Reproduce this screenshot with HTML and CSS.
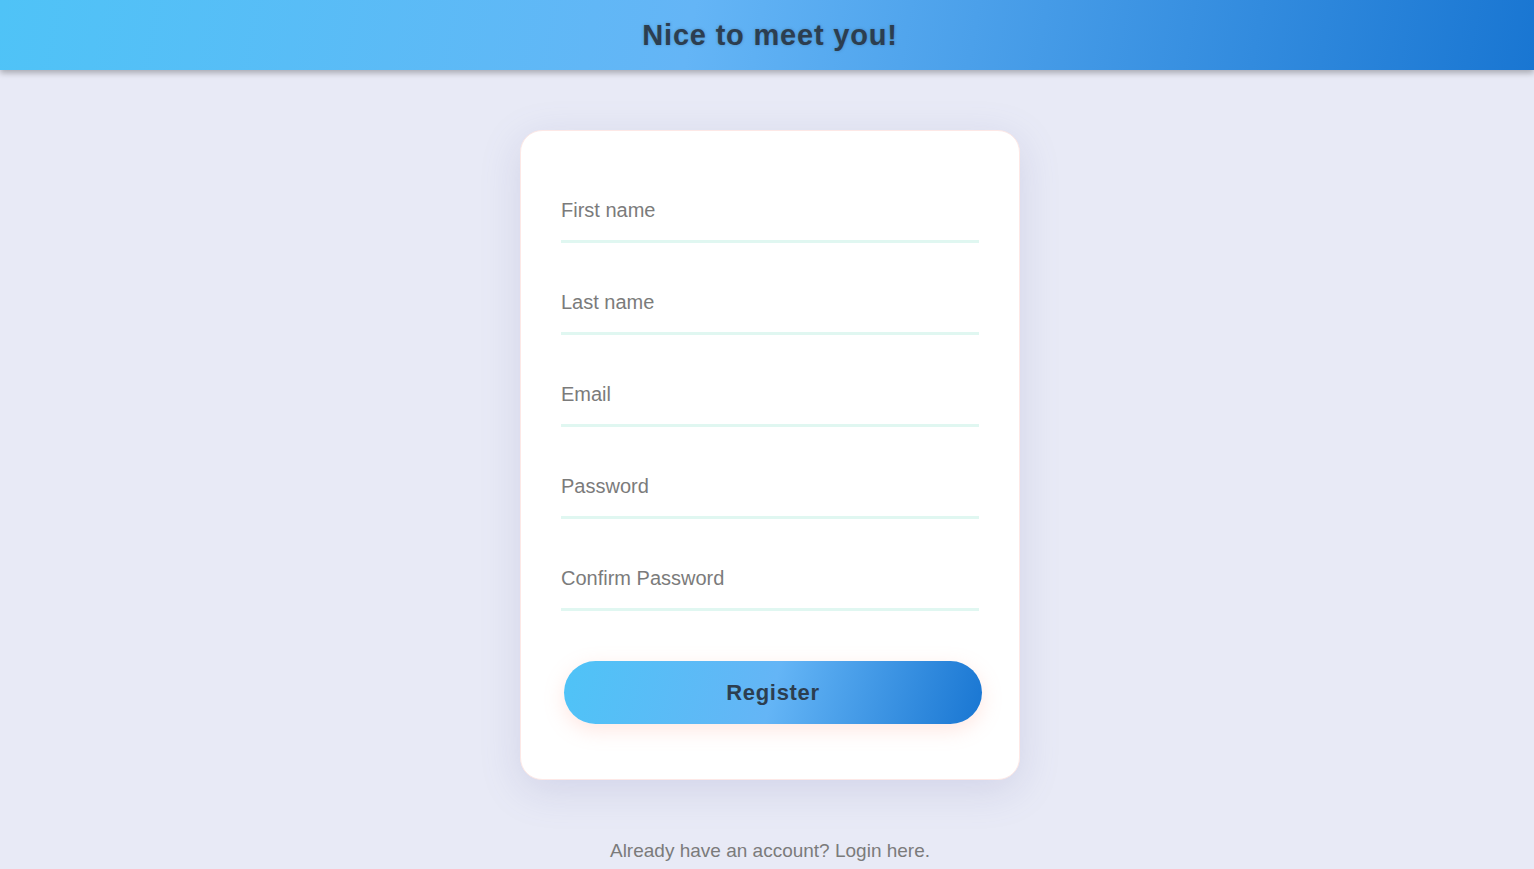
FILE: index.html
```html
<!DOCTYPE html>
<html lang="en">
<head>
<meta charset="utf-8">
<title>Register</title>
<link rel="stylesheet" href="styles.css">
</head>
<body>
<header class="topbar">
  <h1 class="title">Nice to meet you!</h1>
</header>
<main class="page">
  <form class="card">
    <input class="field" type="text" placeholder="First name">
    <input class="field" type="text" placeholder="Last name">
    <input class="field" type="email" placeholder="Email">
    <input class="field" type="password" placeholder="Password">
    <input class="field" type="password" placeholder="Confirm Password">
    <button class="register" type="button">Register</button>
  </form>
  <p class="login">Already have an account? Login here.</p>
</main>
</body>
</html>
```
FILE: styles.css
```css
* { box-sizing: border-box; }
html, body { margin: 0; padding: 0; }
body {
  background: #e8eaf6;
  font-family: "Liberation Sans", Arial, sans-serif;
  min-height: 869px;
  overflow: hidden;
}
.topbar {
  height: 70px;
  padding-left: 6px;
  background: linear-gradient(100deg, #4fc3f7 0%, #64b5f6 45%, #1976d2 100%);
  box-shadow: 0 3px 6px rgba(0, 0, 0, 0.28);
  display: flex;
  align-items: center;
  justify-content: center;
  position: relative;
  z-index: 1;
}
.title {
  margin: 0;
  font-size: 29px;
  font-weight: bold;
  color: #2c3e50;
  letter-spacing: 0.8px;
  text-shadow: 0 0 3px rgba(44, 62, 80, 0.35);
}
.page {
  display: flex;
  flex-direction: column;
  align-items: center;
  padding-top: 60px;
  padding-left: 6px;
}
.card {
  width: 500px;
  height: 650px;
  background: #fff;
  border: 1px solid #fde8e6;
  border-radius: 22px;
  box-shadow: 0 10px 40px rgba(110, 110, 170, 0.18);
  padding: 39px 40px 40px;
  display: flex;
  flex-direction: column;
}
.field {
  display: block;
  width: 100%;
  height: 73px;
  padding: 10px 0 0 0;
  border: none;
  border-bottom: 3px solid #e0f7f1;
  outline: none;
  font-family: "Liberation Sans", Arial, sans-serif;
  font-size: 20px;
  color: #333;
  background: transparent;
  margin-bottom: 19px;
}
.field::placeholder { color: #7b7b7b; }
.register {
  margin: 31px 0 0 3px;
  width: 100%;
  height: 63px;
  border: none;
  border-radius: 32px;
  background: linear-gradient(105deg, #4fc3f7 0%, #64b5f6 50%, #1976d2 100%);
  box-shadow: 0 6px 20px rgba(255, 160, 140, 0.25);
  font-family: "Liberation Sans", Arial, sans-serif;
  font-size: 22px;
  font-weight: bold;
  letter-spacing: 0.7px;
  color: #2c3e50;
  cursor: pointer;
}
.login {
  margin: 60px 0 0;
  font-size: 19px;
  color: #7b7b7b;
}
```
